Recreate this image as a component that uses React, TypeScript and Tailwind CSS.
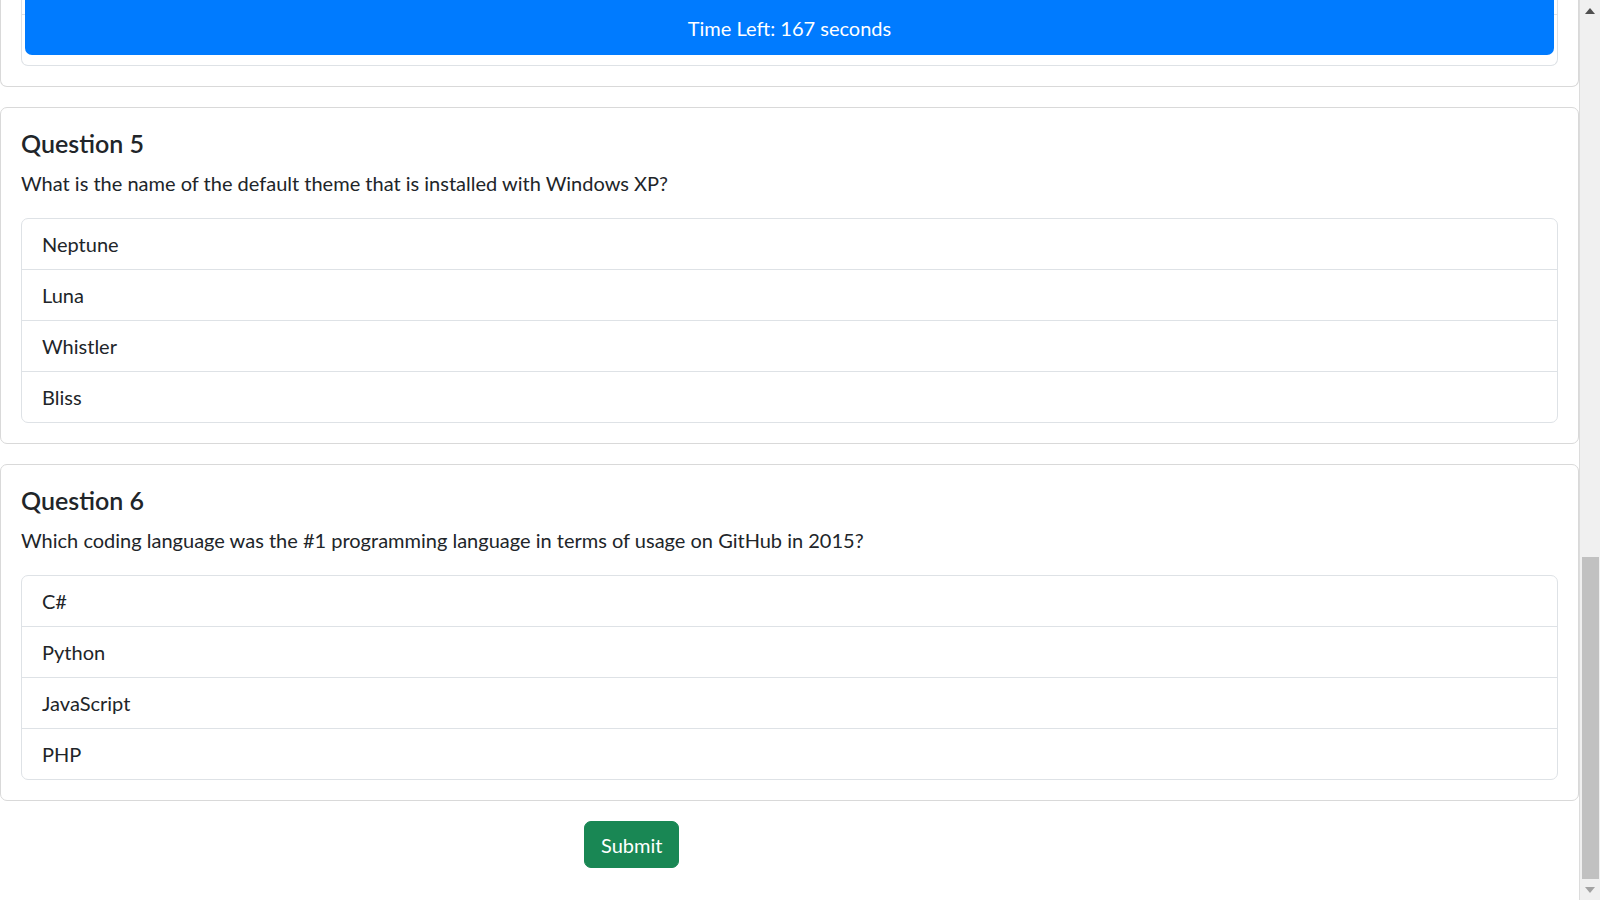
import React from 'react';

interface Question {
  id: number;
  text: string;
  options: string[];
}

const questions: Question[] = [
  {
    id: 5,
    text: 'What is the name of the default theme that is installed with Windows XP?',
    options: ['Neptune', 'Luna', 'Whistler', 'Bliss'],
  },
  {
    id: 6,
    text: 'Which coding language was the #1 programming language in terms of usage on GitHub in 2015?',
    options: ['C#', 'Python', 'JavaScript', 'PHP'],
  },
];

function QuestionCard({ question }: { question: Question }) {
  return (
    <div className="border border-[#d9d9d9] rounded-[7px] p-[20px] mb-[20px] bg-white">
      <h5 className="text-[25px] leading-[30px] font-semibold mb-[10px]">Question {question.id}</h5>
      <p className="text-[20px] leading-[30px] mb-[20px]">{question.text}</p>
      <ul className="border border-[#dee2e6] rounded-[7px]">
        {question.options.map((option, i) => (
          <li
            key={option}
            className={`h-[50px] px-[20px] flex items-center text-[20px] leading-[30px] cursor-pointer ${
              i > 0 ? 'border-t border-[#dee2e6] h-[51px]' : ''
            }`}
          >
            {option}
          </li>
        ))}
      </ul>
    </div>
  );
}

function FakeScrollbar() {
  return (
    <div className="w-[21px] h-screen shrink-0 bg-[#f0f0f0] border-l border-[#dcdcdc] flex flex-col items-center">
      <div className="h-[21px] w-full flex items-center justify-center">
        <svg width="10" height="6" viewBox="0 0 10 6">
          <path d="M0 6 L5 0 L10 6 Z" fill="#505050" />
        </svg>
      </div>
      <div className="flex-1 w-full" />
      <div className="h-[322px] w-[17px] bg-[#c1c1c1]" />
      <div className="h-[21px] w-full flex items-center justify-center">
        <svg width="10" height="6" viewBox="0 0 10 6">
          <path d="M0 0 L10 0 L5 6 Z" fill="#a3a3a3" />
        </svg>
      </div>
    </div>
  );
}

export default function App() {
  return (
    <div
      className="flex h-screen overflow-hidden bg-white text-[#212529]"
      style={{ fontFamily: '"Segoe UI", Lato, "Open Sans", sans-serif' }}
    >
      <div className="flex-1 min-w-0">
        {/* timer card, scrolled so its top is off screen */}
        <div className="border-x border-b border-[#d9d9d9] rounded-b-[7px] px-[20px] pb-[20px] mb-[20px]">
          <div className="relative border-x border-b border-[#dee2e6] rounded-b-[7px]">
            <div className="absolute left-0 right-0 top-[14px] h-px bg-[#dee2e6]" />
            <div className="relative mx-[3px] mb-[10px] h-[55px] bg-[#007bff] rounded-b-[7px] flex items-center justify-center text-white text-[20px]">
              Time Left: 167 seconds
            </div>
          </div>
        </div>

        {questions.map((q) => (
          <QuestionCard key={q.id} question={q} />
        ))}

        <button className="ml-[584px] h-[47px] px-[16px] bg-[#198754] text-white text-[20px] leading-[30px] rounded-[7px] border border-[#198754]">
          Submit
        </button>
      </div>
      <FakeScrollbar />
    </div>
  );
}
